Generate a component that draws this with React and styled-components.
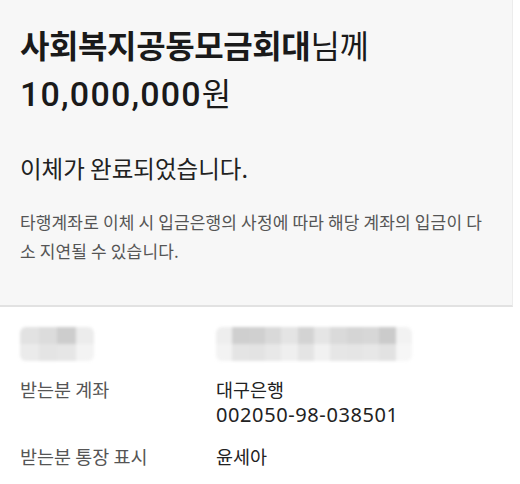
import styled, { createGlobalStyle } from "styled-components";

const GlobalStyle = createGlobalStyle`
    html, body {
        margin: 0;
        padding: 0;
        background: #ffffff;
    }
    body {
        font-family: "Noto Sans CJK KR", "Noto Sans", sans-serif;
        color: #1c1c1c;
    }
`;

const leftBlur = {
    top: ["#e2e2e2", "#dcdcdc", "#cdcdcd", "#ececec"],
    bottom: ["#ebebeb", "#e4e4e4", "#e6e6e6", "#f3f3f3"],
};

const rightBlur = {
    top: ["#eeeeee", "#cfcfcf", "#d0d0d0", "#d9d9d9", "#e4e4e4", "#d3d3d3", "#e5e5e5", "#dadada", "#d5d5d5", "#d7d7d7", "#cbcbcb", "#f2f2f2"],
    bottom: ["#f3f3f3", "#e4e4e4", "#e3e3e3", "#e8e8e8", "#efefef", "#e4e4e4", "#f1f1f1", "#e6e6e6", "#e5e5e5", "#e7e7e7", "#e2e2e2", "#f6f6f6"],
};

function Mosaic({ data, width }) {
    return (
        <Blur $w={width} $n={data.top.length}>
            {[...data.top, ...data.bottom].map((c, i) => (
                <Cell key={i} style={{ background: c }} />
            ))}
        </Blur>
    );
}

export default function App() {
    return (
        <Page>
            <GlobalStyle />
            <Top>
                <Title>
                    <b>사회복지공동모금회대</b>님께
                </Title>
                <Amount>
                    <span>10,000,000</span>원
                </Amount>
                <Done>이체가 완료되었습니다.</Done>
                <Note>
                    타행계좌로 이체 시 입금은행의 사정에 따라 해당 계좌의 입금이 다소 지연될 수 있습니다.
                </Note>
            </Top>
            <Details>
                <Row $blur>
                    <Mosaic data={leftBlur} width={74} />
                    <Mosaic data={rightBlur} width={196} />
                </Row>
                <Row>
                    <Label>받는분 계좌</Label>
                    <Value>
                        대구은행
                        <Account>002050-98-038501</Account>
                    </Value>
                </Row>
                <Row>
                    <Label>받는분 통장 표시</Label>
                    <Value>윤세아</Value>
                </Row>
            </Details>
        </Page>
    );
}

const Page = styled.div`
    width: 520px;
    height: 484px;
    overflow: hidden;
    background: #ffffff;
`;

const Top = styled.div`
    background: #f7f7f7;
    padding: 24px 22px 40px 20px;
    border-bottom: 2px solid #e2e2e2;
    border-right: 1px solid #ececec;
    width: 513px;
    box-sizing: border-box;
`;

const Title = styled.div`
    font-size: 32px;
    line-height: 40px;
    color: #1a1a1a;
    letter-spacing: -0.4px;
    white-space: nowrap;
    b {
        font-weight: 700;
    }
`;

const Amount = styled.div`
    font-size: 32px;
    line-height: 40px;
    margin-top: 8px;
    color: #1a1a1a;
    span {
        font-family: "Roboto", "Noto Sans", sans-serif;
        font-weight: 500;
        font-size: 34px;
        letter-spacing: 1.2px;
    }
`;

const Done = styled.div`
    font-size: 23.5px;
    line-height: 28px;
    margin-top: 40px;
    color: #222;
`;

const Note = styled.div`
    font-size: 17px;
    line-height: 29px;
    margin-top: 25px;
    color: #555;
    letter-spacing: 0.15px;
    word-break: break-all;
`;

const Details = styled.div`
    padding: 20px 20px 0 20px;
`;

const Row = styled.div`
    display: grid;
    grid-template-columns: 196px 1fr;
    margin-bottom: ${(p) => (p.$blur ? "16px" : "15px")};
`;

const Blur = styled.div`
    width: ${(p) => p.$w}px;
    height: 34px;
    display: grid;
    grid-template-columns: repeat(${(p) => p.$n}, 1fr);
    grid-template-rows: 1fr 1fr;
    filter: blur(1.5px);
    border-radius: 6px;
    overflow: hidden;
`;

const Cell = styled.div``;

const Label = styled.div`
    font-size: 18.5px;
    line-height: 24px;
    color: #555;
`;

const Value = styled.div`
    font-size: 18.5px;
    line-height: 24px;
    color: #222;
`;

const Account = styled.div`
    font-size: 20px;
    line-height: 28px;
    letter-spacing: 0.6px;
    font-family: "Noto Sans", sans-serif;
`;
